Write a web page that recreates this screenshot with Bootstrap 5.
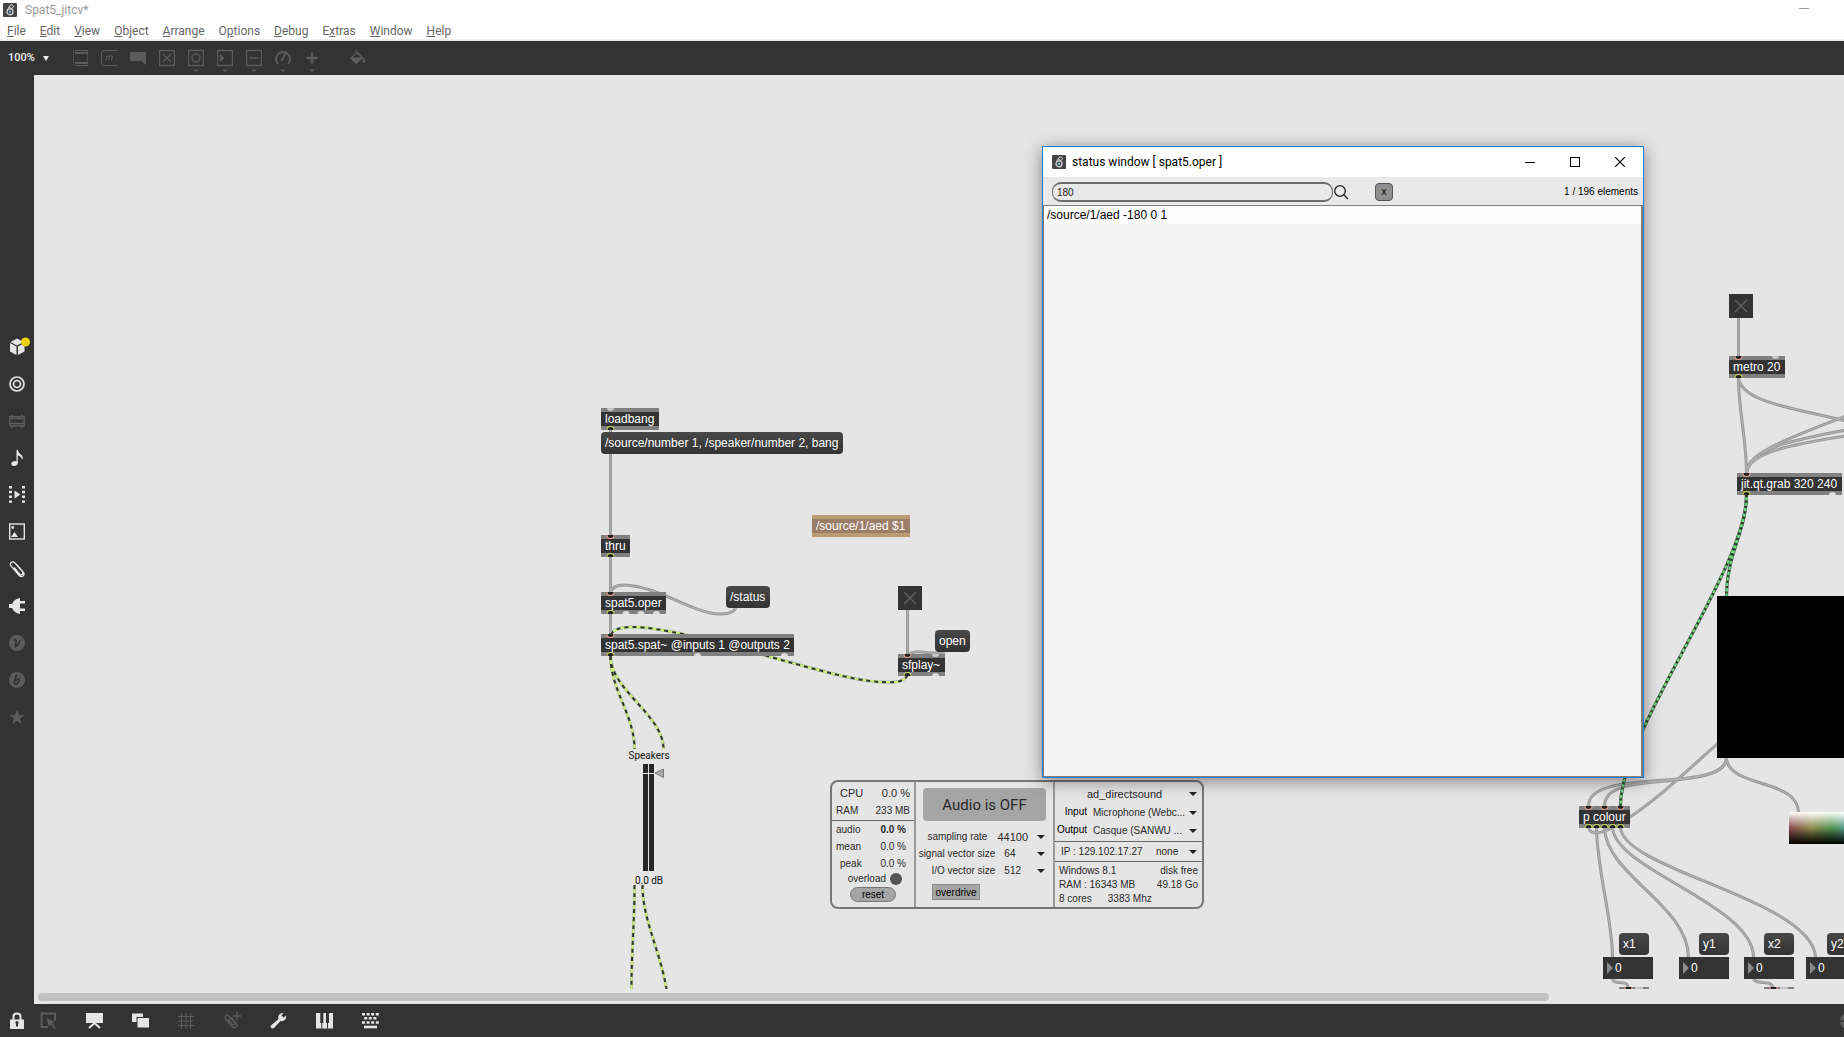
<!DOCTYPE html>
<html lang="en">
<head>
<meta charset="utf-8">
<meta name="viewport" content="width=device-width, initial-scale=1">
<title>Spat5_jitcv*</title>
<link href="https://cdn.jsdelivr.net/npm/bootstrap@5.3.0/dist/css/bootstrap.min.css" rel="stylesheet">
<style>
:root{--ink:#333;--paper:#e5e5e5;--dim:#5b5b5b;--lit:#e5e5e5}
body{font-family:"Liberation Sans",Arial,sans-serif;font-size:12px;line-height:16px;background:var(--ink);color:#222}
button,input,select{font:inherit;color:inherit;border:0;padding:0;background:none}
svg{display:block}
.ui-font{font-family:Roboto,"Open Sans",sans-serif}
.titlebar{height:20px;padding-left:3px;color:#999;background:#fff}
.titlebar .min-btn{width:70px;height:16px}
.menubar{height:21px;gap:14px;padding:2px 7px 0;background:#fff;border-bottom:2px solid #f0f0f0;line-height:18px}
.menubar a{color:#666;text-decoration:none}
.toolbar{height:34px;background:var(--ink);color:var(--dim)}
.toolbar .zoom-btn{width:65px;padding-left:8px;color:#eee;font:500 11px/16px Roboto,sans-serif}
.tool{width:29px;height:34px;color:inherit;display:flex;align-items:center;justify-content:center}
.tool.paint{margin-left:17px}
.sidebar{width:34px;background:var(--ink);padding-bottom:16px;color:var(--lit)}
.sidebar button{height:37px;width:34px;display:flex;align-items:center;justify-content:center}
.off{color:var(--dim)!important}
.footbar{height:33px;background:var(--ink);color:var(--lit)}
.footbar button{width:46px;height:33px;display:flex;align-items:center;justify-content:center}
.footbar .narrow{width:34px}
.footbar .pick{width:29px;margin-right:8px}
.footbar .cut{width:30px;margin-right:-19px}
.patch{background:var(--paper)}
.patch .wires{position:absolute;left:0;top:0}
.scroller{position:absolute;left:4px;bottom:3px;width:83.5%;height:8px;border-radius:4px;background:#c1c1c1}
.obj,.msg,.num,.tog{position:absolute;height:22px;white-space:nowrap;color:#fff}
.obj{background:var(--ink);border:solid #808080;border-width:4px 0;padding-left:4px;line-height:14px}
.msg{background:linear-gradient(#484848,#333);border-radius:4px;padding-left:4px;text-align:left;line-height:20px}
.num{width:50px;background:var(--ink) url("data:image/svg+xml,%3Csvg xmlns='http://www.w3.org/2000/svg' width='6' height='12'%3E%3Cpath d='M0 0L6 6L0 12z' fill='%238a8a8a'/%3E%3C/svg%3E") no-repeat 4px 5px;padding-left:12px}
.tog{width:24px;height:24px;appearance:none;background:var(--ink) url("data:image/svg+xml,%3Csvg xmlns='http://www.w3.org/2000/svg' width='24' height='24'%3E%3Cpath d='M6 6L18 18M18 6L6 18' stroke='%23636363' stroke-width='1.4'/%3E%3C/svg%3E")}
.obj.tan{background:#9c7d68;border-color:#bd9b72}
/* node places on the patch canvas */
#o-load{left:567px;top:333px;width:58px}
#m-init{left:567px;top:357px;width:242px}
#o-thru{left:567px;top:460px;width:29px}
#o-aed{left:778px;top:440px;width:98px}
#o-oper{left:567px;top:517px;width:65px}
#m-status{left:692px;top:511px;width:44px}
#o-spat{left:567px;top:559px;width:193px}
#t-play{left:864px;top:511px}
#m-open{left:901px;top:555px;width:35px}
#o-sf{left:864px;top:579px;width:47px}
#t-metro{left:1695px;top:219px}
#o-metro{left:1695px;top:281px;width:56px}
#o-grab{left:1703px;top:398px;width:105px}
#o-colour{left:1545px;top:731px;width:51px}
#m-x1{left:1585px;top:858px;width:30px}
#m-y1{left:1665px;top:858px;width:30px}
#m-x2{left:1730px;top:858px;width:30px}
#m-y2{left:1793px;top:858px;width:30px}
#n-x1{left:1569px;top:882px}
#n-y1{left:1645px;top:882px}
#n-x2{left:1710px;top:882px}
#n-y2{left:1772px;top:882px}
.screen{position:absolute;left:1683px;top:521px;width:320px;height:162px;background:#000}
.swatch{position:absolute;left:1755px;top:737px;width:128px;height:32px;background:linear-gradient(#fff,rgba(255,255,255,.4) 30%,rgba(255,255,255,0) 50%,rgba(0,0,0,.45) 70%,#000),linear-gradient(90deg,#8c4a50,#8e8a4c 22px,#4f9450 44px,#5a9c90 56px,#4a5a9a 90px,#8c4a70)}
.meter{position:absolute;left:585px;top:673px;width:60px;font:10px/16px Roboto,sans-serif;color:#111}
.meter .level{margin-top:2px}
/* audio driver panel */
.dsp{position:absolute;left:796px;top:705px;width:374px;height:129px;border:2px solid #777;border-radius:8px;font-size:10px;line-height:14px;color:#2a2a2a}
.dsp .cpu{width:82px}
.dsp .load{padding:4px 4px 2px}
.dsp .mid{width:141px;border:solid #999;border-width:0 2px}
.dsp .line{border-bottom:1px solid #666}
.dsp .r17{height:17px;padding:0 8px 0 4px}
.dsp .big{font-size:11px}
.dsp select{appearance:none;background:url("data:image/svg+xml,%3Csvg xmlns='http://www.w3.org/2000/svg' width='8' height='4'%3E%3Cpath d='M0 0H8L4 4z' fill='%23222'/%3E%3C/svg%3E") no-repeat right center;height:16px}
.dsp .audio-btn{height:33px;margin:6px 7px 7px;background:#a5a5a5;border-radius:4px;font:15px/20px Roboto,sans-serif}
.dsp .reset-btn{width:46px;height:15px;border:1px solid #777;border-radius:8px;background:#a5a5a5;line-height:12px;color:#000;margin-top:1px}
.dsp .od-btn{width:48px;height:16px;border:1px solid #8d8d8d;background:#a5a5a5;margin:5px 0 0 16px;line-height:13px;color:#000}
.dsp .opt label{width:80px;text-align:right;margin-right:9px}
.dsp .opt select{width:41px}
.dsp .opt.rate label{width:72px;margin-right:10px}
.dsp .opt.rate select{width:48px}
.dsp .led{width:12px;height:12px;border-radius:50%;background:#555}
.dsp .io{height:18px}
.dsp .io label{width:32px;text-align:right;margin-right:6px;color:#000}
.dsp .io select{width:104px}
.dsp .driver{display:block;width:110px;margin:4px 5px 3px 32px;font-size:11px;line-height:14px}
.dsp .ip{height:20px;padding:0 5px 0 6px}
.dsp .ip select{width:41px}
.dsp .sys{padding:2px 4px 0}
/* status window */
.statwin{position:absolute;left:1008px;top:71px;width:602px;height:632px;border:1px solid #1a7fd4;box-shadow:0 3px 16px rgba(0,0,0,.45)}
.statwin .cap{height:30px;background:#fff;color:#000;padding:0 1px 0 9px}
.statwin .cap-text{padding-left:6px}
.statwin .cap button{width:45px;height:30px;display:flex;align-items:center;justify-content:center}
.statwin .find{height:28px;background:#e9e9e9;padding:2px 5px 0 9px;font-size:10px}
.statwin .find input{width:281px;height:20px;border:2px solid #6b6b6b;border-left-width:1px;border-right-width:1px;border-radius:9px;padding:0 4px}
.statwin .clr{width:18px;height:18px;border:1px solid #555;border-radius:4px;background:#8f8f8f;margin-left:26px;line-height:12px;color:#000}
.statwin .list{border:1px solid #808080;border-right-width:2px;background:#f3f3f3}
.statwin .item{height:18px;background:#fcfcfc;padding-left:3px;font-size:12px;line-height:18px;color:#000}
</style>
<script src="https://cdn.jsdelivr.net/npm/bootstrap@5.3.0/dist/js/bootstrap.bundle.min.js"></script>
</head>
<body class="vh-100 d-flex flex-column overflow-hidden">
<svg width="0" height="0" class="position-absolute">
<defs>
<symbol id="logo" viewBox="0 0 14 14"><rect width="14" height="14" rx="1" fill="#444"/><circle cx="7" cy="8.800" r="3" fill="none" stroke="#d8d8d8" stroke-width="1.200"/><circle cx="8.400" cy="3.600" r="1.800" fill="none" stroke="#d8d8d8" stroke-width="1"/><path d="M6.400 3.200L4.600 6.600" stroke="#d8d8d8"/><circle cx="7" cy="8.800" r="1.100" fill="#7fd3e0"/></symbol>
<g id="inC"><path d="M-4 0A4 4 0 0 0 4 0z" fill="#f0a090"/><path d="M-3 0A3 3 0 0 0 3 0z" fill="#222"/></g>
<g id="outC"><path d="M-4 0A4 4 0 0 1 4 0z" fill="#c8d850"/><path d="M-3 0A3 3 0 0 1 3 0z" fill="#222"/></g>
<path id="inU" d="M-3.500 0A3.500 3 0 0 0 3.500 0z" fill="#c8c8c8"/>
<path id="outU" d="M-3.500 0A3.500 3 0 0 1 3.500 0z" fill="#dcdcdc"/>
</defs>
</svg>

<header class="ui-font flex-shrink-0">
  <div class="titlebar d-flex align-items-center gap-1">
    <svg width="14" height="14"><use href="#logo"/></svg><span class="ps-1 ms-n1 flex-grow-1">Spat5_jitcv*</span>
    <button class="min-btn" aria-label="Minimise"><svg width="70" height="16"><path d="M25 6.500H35" stroke="#999"/></svg></button>
  </div>
  <nav class="menubar d-flex">
    <a href="#"><u>F</u>ile</a><a href="#"><u>E</u>dit</a><a href="#"><u>V</u>iew</a><a href="#"><u>O</u>bject</a><a href="#"><u>A</u>rrange</a><a href="#">O<u>p</u>tions</a><a href="#"><u>D</u>ebug</a><a href="#">E<u>x</u>tras</a><a href="#"><u>W</u>indow</a><a href="#"><u>H</u>elp</a>
  </nav>
</header>

<div class="toolbar d-flex flex-shrink-0 align-items-center">
  <button class="zoom-btn d-flex align-items-center gap-2">100%<svg width="6" height="5"><path d="M0 0H6L3 5z" fill="#eee"/></svg></button>
  <button class="tool" aria-label="Object"><svg width="16" height="24" fill="none" stroke="currentColor"><path d="M3 4.500H16M3 19.500H16" /><path d="M3 7H16M3 17H16" stroke-width="2"/><path d="M1.500 4V20M15.500 4V20" opacity=".6"/></svg></button>
  <button class="tool" aria-label="Message"><svg width="16" height="24" fill="none" stroke="currentColor"><path d="M16 4.500H3Q.5 4.500.5 7V17Q.5 19.500 3 19.500H16M6 10L5 14.500M6 10H8.500L7.500 14.500M8.500 10H11.500L10.500 14.500"/></svg></button>
  <button class="tool" aria-label="Comment"><svg width="16" height="24"><path d="M0 6H16V19L11 15H0z" fill="currentColor"/></svg></button>
  <button class="tool" aria-label="Toggle"><svg width="16" height="24" fill="none" stroke="currentColor"><rect x=".5" y="4.500" width="15" height="15" stroke-width="1.400"/><path d="M4 8L12 16M12 8L4 16" stroke-width="1.300"/></svg></button>
  <button class="tool" aria-label="Button"><svg width="16" height="28" fill="none" stroke="currentColor"><rect x=".5" y="6.500" width="15" height="15" stroke-width="1.400"/><circle cx="8" cy="14" r="4" stroke-width="1.400"/><path d="M5 25.500H11L8 28z" fill="currentColor" stroke="none"/></svg></button>
  <button class="tool" aria-label="Number"><svg width="16" height="28" fill="none" stroke="currentColor"><rect x=".5" y="6.500" width="15" height="15" stroke-width="1.400"/><path d="M3 10L7.500 14L3 18z" fill="currentColor" stroke="none"/><path d="M5 25.500H11L8 28z" fill="currentColor" stroke="none"/></svg></button>
  <button class="tool" aria-label="Slider"><svg width="16" height="28" fill="none" stroke="currentColor"><rect x=".5" y="6.500" width="15" height="15" stroke-width="1.400"/><path d="M3 14H13" stroke-width="1.400"/><path d="M5 25.500H11L8 28z" fill="currentColor" stroke="none"/></svg></button>
  <button class="tool" aria-label="Dial"><svg width="18" height="28" fill="none" stroke="currentColor"><path d="M4 20A7 7 0 1 1 14 20" stroke-width="2"/><path d="M7.500 17L11.500 9.500" stroke-width="1.800"/><path d="M6 25.500H12L9 28z" fill="currentColor" stroke="none"/></svg></button>
  <button class="tool" aria-label="Add"><svg width="16" height="28" fill="none" stroke="currentColor"><path d="M8 8.500V19.500M2.500 14H13.500" stroke-width="2.400"/><path d="M5 25.500H11L8 28z" fill="currentColor" stroke="none"/></svg></button>
  <button class="tool paint" aria-label="Format"><svg width="17" height="18" fill="currentColor"><path d="M1 9L8 3L14 9L7 15.500z"/><path d="M6.500 1.500L14 9.500" stroke="currentColor" stroke-width="1.300"/><path d="M3.500 8.500L8 4.500L12 8.500z" fill="#333"/><path d="M14.500 8Q17 12 15.800 13.500Q14.500 14.500 13.500 13z"/></svg></button>
</div>

<main class="d-flex flex-grow-1 overflow-hidden">
  <aside class="sidebar d-flex flex-column justify-content-center flex-shrink-0">
    <button aria-label="Packages"><svg width="22" height="20" class="ms-1" fill="currentColor"><path d="M2 6L8.500 9.500V18L2 14.500zM10 9.500L16.500 6V14.500L10 18zM2.500 5L9 1.500L15.500 5L9 8.500z"/><circle cx="17.500" cy="5" r="4.500" fill="#f0d010"/></svg></button>
    <button aria-label="Target"><svg width="16" height="16" fill="none" stroke="currentColor" stroke-width="1.700"><circle cx="8" cy="8" r="7"/><circle cx="8" cy="8" r="3.500"/></svg></button>
    <button class="off" aria-label="Devices"><svg width="16" height="16" fill="none" stroke="currentColor" stroke-width="1.500"><rect x=".8" y="3.800" width="14.400" height="9"/><path d="M1 10.500H15M2 5.500H14M3 2V4M13 2V4M3 13V15M13 13V15"/></svg></button>
    <button aria-label="Audio"><svg width="16" height="18" fill="currentColor"><ellipse cx="5.500" cy="14.500" rx="3.200" ry="2.400" transform="rotate(-18 5.500 14.500)"/><path d="M7.500 1H8.800Q9.500 4 12 5.500Q15 8 13 11Q12.500 7 8.800 6.500V14.500H7.500z"/></svg></button>
    <button aria-label="Video"><svg width="16" height="17" fill="currentColor"><path d="M5.500 4.500L11.500 8.500L5.500 12.500z"/><path d="M1.500 0V17M14.500 0V17" stroke="currentColor" stroke-width="3" stroke-dasharray="2.400 2.400"/></svg></button>
    <button aria-label="Images"><svg width="16" height="17"><rect x=".7" y="1" width="14.600" height="15" fill="none" stroke="currentColor" stroke-width="1.400"/><circle cx="3.800" cy="4.500" r="1.400" fill="currentColor"/><path d="M2 14L5.500 9L9 14z" fill="currentColor"/></svg></button>
    <button aria-label="Clippings"><svg width="16" height="18" fill="none" stroke="currentColor" stroke-width="1.300"><path d="M5 7.500L10.500 14Q12 15.500 13.200 14.200Q14.500 13 13.200 11.300L6 3Q4 1 2.300 2.500Q.5 4 2.200 6.200L10 15.300Q12 17.500 14 16Q16 14 14.300 12.200L7.500 4.500"/></svg></button>
    <button aria-label="Plug-ins"><svg width="16" height="16" fill="currentColor"><path d="M0 6H3Q5 1 11 0V3H16V5.500H11V10.500H16V13H11V16Q5 15 3 10H0z"/></svg></button>
    <button class="off" aria-label="Vizzie"><svg width="16" height="16"><circle cx="8" cy="8" r="8" fill="currentColor"/><path d="M5 5.500Q7 3.500 7 6L6.800 11.500Q11 9 10.800 5" fill="none" stroke="#333" stroke-width="1.700"/></svg></button>
    <button class="off" aria-label="Beap"><svg width="16" height="16"><circle cx="8" cy="8" r="8" fill="currentColor"/><path d="M7.500 2.500L5.300 10.500Q5.500 13 8 11.500Q11 9 10 7Q8.500 6 6.500 9" fill="none" stroke="#333" stroke-width="1.700"/></svg></button>
    <button class="off" aria-label="Favourites"><svg width="16" height="16" fill="currentColor"><path d="M8 .5L10 6H15.500L11 9.500L12.700 15L8 11.700L3.300 15L5 9.500L.5 6H6z"/></svg></button>
  </aside>

  <section class="patch position-relative flex-grow-1 overflow-hidden">
    <svg class="wires" width="1810" height="914" viewBox="34 75 1810 914" fill="none">
      <defs>
        <g id="cords">
          <path d="M610.500 430V537M610.500 556V594M610.500 613V636M907.500 610V655M1738.500 318V357"/>
          <path d="M736 608C732 614 726 614 718 614C690 612 658 586 624 585C616 585 611 588 610.500 594"/>
          <path d="M945 652C930 656 915 647 907.500 656"/>
          <path d="M1738.500 378C1738.500 410 1746.500 440 1746.500 473"/>
          <path d="M1738.500 378C1742 402 1792 408 1846 421"/>
          <path d="M1746.500 473C1748 452 1790 438 1846 416"/>
          <path d="M1746.500 473C1748 448 1795 440 1846 430"/>
          <path d="M1746.500 473C1748 452 1795 444 1846 436"/>
          <path d="M1588.500 828C1592 838 1608 832 1630 817C1660 797 1690 768 1725 737"/>
          <path d="M1726.500 758C1726 775 1695 778 1665 780C1630 783 1588.500 784 1588.500 806"/>
          <path d="M1726.500 758C1726 775 1695 778 1665 781C1640 784 1604.500 784 1604.500 806"/>
          <path d="M1726.500 758C1728 788 1797 778 1798.500 812"/>
          <path d="M1596.500 828C1597 870 1612.500 920 1612.500 957"/>
          <path d="M1604.500 828C1606 875 1688 905 1688.500 957"/>
          <path d="M1612.500 828C1616 870 1753 905 1753.500 957"/>
          <path d="M1620.500 828C1624 870 1812 900 1815.500 957"/>
          <path d="M1612.500 979C1614 986 1628 978 1628.500 989M1753.500 979C1757 986 1771 978 1773.500 989"/>
        </g>
        <g id="signals">
          <path d="M907.500 675C904 684 890 682 880 682C830 680 690 627 632 627C618 627 611 631 610.500 636"/>
          <path d="M610.500 656C610.500 690 634.500 715 634.500 749"/>
          <path d="M610.500 656C610.500 690 663.500 715 663.500 749"/>
          <path d="M634.500 885C634.500 925 631.500 950 631.500 989"/>
          <path d="M642.500 885C642.500 920 660 950 666.500 989"/>
        </g>
        <g id="matrices">
          <path d="M1746.500 495C1746.500 530 1726.500 555 1726.500 596"/>
          <path d="M1746.500 495C1746.500 570 1620.500 730 1620.500 806"/>
        </g>
      </defs>
      <use href="#cords" stroke="#979797" stroke-width="3"/><use href="#cords" stroke="#b0b0b0" stroke-width="1.200"/>
      <use href="#signals" stroke="#b4b8a4" stroke-width="3"/><use href="#signals" stroke="#cdf573" stroke-width="1.800"/><use href="#signals" stroke="#333" stroke-width="2" stroke-dasharray="4 4"/>
      <use href="#matrices" stroke="#56645a" stroke-width="3.200"/><use href="#matrices" stroke="#6edc78" stroke-width="2"/><use href="#matrices" stroke="#2c3a2c" stroke-width="2.200" stroke-dasharray="2.200 3.300"/>
    </svg>

    <div class="obj" id="o-load">loadbang</div>
    <button class="msg" id="m-init">/source/number 1, /speaker/number 2, bang</button>
    <div class="obj" id="o-thru">thru</div>
    <div class="obj tan" id="o-aed">/source/1/aed $1</div>
    <div class="obj" id="o-oper">spat5.oper</div>
    <button class="msg" id="m-status">/status</button>
    <div class="obj" id="o-spat">spat5.spat~ @inputs 1 @outputs 2</div>
    <input type="checkbox" class="tog" id="t-play" aria-label="Play">
    <button class="msg" id="m-open">open</button>
    <div class="obj" id="o-sf">sfplay~</div>
    <input type="checkbox" class="tog" id="t-metro" aria-label="Metro on">
    <div class="obj" id="o-metro">metro 20</div>
    <div class="obj" id="o-grab">jit.qt.grab 320 240</div>
    <div class="screen"></div>
    <div class="swatch"></div>
    <div class="obj" id="o-colour">p colour</div>
    <button class="msg" id="m-x1">x1</button><button class="msg" id="m-y1">y1</button><button class="msg" id="m-x2">x2</button><button class="msg" id="m-y2">y2</button>
    <input class="num" id="n-x1" value="0" aria-label="x1"><input class="num" id="n-y1" value="0" aria-label="y1"><input class="num" id="n-x2" value="0" aria-label="x2"><input class="num" id="n-y2" value="0" aria-label="y2">

    <svg class="wires pe-none" width="1810" height="914" viewBox="34 75 1810 914">
      <use href="#inU" x="610.500" y="408"/><use href="#outC" x="610.500" y="430"/>
      <use href="#inC" x="610.500" y="535"/><use href="#outC" x="610.500" y="557"/>
      <use href="#inC" x="610.500" y="592"/><use href="#outC" x="610.500" y="614"/><use href="#outU" x="626" y="614"/><use href="#outU" x="641" y="614"/><use href="#outU" x="656.500" y="614"/>
      <use href="#inC" x="610.500" y="634"/><use href="#outC" x="610.500" y="656"/><use href="#outU" x="697.500" y="656"/><use href="#outU" x="784.500" y="656"/>
      <use href="#inC" x="907.500" y="654"/><use href="#inU" x="935.500" y="654"/><use href="#outC" x="907.500" y="676"/><use href="#outU" x="935.500" y="676"/>
      <use href="#inC" x="1738.500" y="356"/><use href="#inU" x="1775.500" y="356"/><use href="#outC" x="1738.500" y="378"/>
      <use href="#inC" x="1746.500" y="473"/><use href="#outC" x="1746.500" y="495"/><use href="#outU" x="1832.500" y="495"/>
      <use href="#inC" x="1588.500" y="806"/><use href="#inC" x="1604.500" y="806"/><use href="#inC" x="1620.500" y="806"/>
      <use href="#outC" x="1588.500" y="828"/><use href="#outC" x="1596.500" y="828"/><use href="#outC" x="1604.500" y="828"/><use href="#outC" x="1612.500" y="828"/><use href="#outC" x="1620.500" y="828"/>
      <path d="M1619 988H1649M1764 988H1794" stroke="#808080" stroke-width="2"/><path d="M1635 988H1643M1780 988H1788" stroke="#c4c4c4" stroke-width="2"/>
      <use href="#inC" x="1628.500" y="987"/><use href="#inC" x="1773.500" y="987"/>
    </svg>

    <div class="meter d-flex flex-column align-items-center">
      <span>Speakers</span>
      <svg width="34" height="107"><path d="M11 0H16V107H11zM17 0H22V107H17z" fill="#282828"/><path d="M11 9.500H22" stroke="#eee"/><path d="M23 9L31.500 5V13.500z" fill="#aaa" stroke="#777"/></svg>
      <span class="level">0.0 dB</span>
    </div>

    <div class="dsp d-flex">
      <div class="cpu">
        <div class="line load">
          <div class="d-flex justify-content-between big pb-1"><span class="ps-1">CPU</span><span>0.0 %</span></div>
          <div class="d-flex justify-content-between"><span>RAM</span><span>233 MB</span></div>
        </div>
        <div class="r17 d-flex justify-content-between align-items-center"><span>audio</span><b>0.0 %</b></div>
        <div class="r17 d-flex justify-content-between align-items-center"><span>mean</span><span>0.0 %</span></div>
        <div class="r17 d-flex justify-content-between align-items-center"><span class="ps-1">peak</span><span>0.0 %</span></div>
        <div class="d-flex justify-content-end align-items-center gap-1 pe-2 me-1"><span>overload</span><span class="led"></span></div>
        <div class="d-flex justify-content-center"><button class="reset-btn">reset</button></div>
      </div>
      <div class="mid d-flex flex-column">
        <button class="audio-btn">Audio is OFF</button>
        <div class="opt rate r17 ps-0 d-flex align-items-center"><label for="sr">sampling rate</label><select id="sr" class="big"><option>44100</option></select></div>
        <div class="opt r17 ps-0 d-flex align-items-center"><label for="sv">signal vector size</label><select id="sv"><option>64</option></select></div>
        <div class="opt r17 ps-0 d-flex align-items-center"><label for="iv">I/O vector size</label><select id="iv"><option>512</option></select></div>
        <button class="od-btn">overdrive</button>
      </div>
      <div class="flex-grow-1">
        <div class="line">
          <select class="driver" aria-label="Driver"><option>ad_directsound</option></select>
          <div class="io d-flex"><label for="inp">Input</label><select id="inp"><option>Microphone (Webc...</option></select></div>
          <div class="io d-flex"><label for="outp">Output</label><select id="outp"><option>Casque (SANWU ...</option></select></div>
        </div>
        <div class="ip line d-flex justify-content-between align-items-center"><span>IP : 129.102.17.27</span><select aria-label="Network"><option>none</option></select></div>
        <div class="sys">
          <div class="d-flex justify-content-between"><span>Windows 8.1</span><span>disk free</span></div>
          <div class="d-flex justify-content-between"><span>RAM : 16343 MB</span><span>49.18 Go</span></div>
          <div class="d-flex gap-3"><span>8 cores</span><span>3383 Mhz</span></div>
        </div>
      </div>
    </div>

    <div class="statwin d-flex flex-column">
      <div class="cap ui-font d-flex align-items-center">
        <svg width="14" height="14"><use href="#logo"/></svg><span class="cap-text flex-grow-1">status window [ spat5.oper ]</span>
        <button aria-label="Minimise"><svg width="10" height="10"><path d="M0 5.500H10" stroke="#000"/></svg></button>
        <button aria-label="Maximise"><svg width="10" height="10"><rect x=".5" y=".5" width="9" height="9" fill="none" stroke="#000"/></svg></button>
        <button aria-label="Close"><svg width="10" height="10"><path d="M0 0L10 10M10 0L0 10" stroke="#000" stroke-width="1.200"/></svg></button>
      </div>
      <div class="find d-flex align-items-center">
        <input value="180" aria-label="Search"><svg width="16" height="16" class="ms-0" fill="none" stroke="#222" stroke-width="1.300"><circle cx="7" cy="7" r="5.300"/><path d="M10.800 10.800L15 15"/></svg>
        <button class="clr">x</button>
        <span class="ms-auto text-black">1 / 196 elements</span>
      </div>
      <div class="list flex-grow-1"><div class="item">/source/1/aed -180 0 1</div></div>
    </div>

    <div class="scroller"></div>
  </section>
</main>

<footer class="footbar d-flex flex-shrink-0 overflow-hidden">
  <button class="narrow" aria-label="Lock"><svg width="14" height="17"><path d="M3.500 8V4.500Q3.500 1.500 7 1.500T10.500 4.500V8" fill="none" stroke="currentColor" stroke-width="2"/><path d="M0 7.500H14V17H0z" fill="currentColor"/><path d="M7 10V14.500" stroke="#333" stroke-width="2"/><circle cx="7" cy="10.500" r="1.600" fill="#333"/></svg></button>
  <button class="pick off" aria-label="Select"><svg width="17" height="17"><path d="M8 15H1.500V1.500H15V9" fill="none" stroke="currentColor" stroke-width="2"/><path d="M6.500 6L15 10L12 11L16 16L14.500 17L11 12.500L9 15z" fill="currentColor"/></svg></button>
  <button aria-label="Presentation"><svg width="17" height="17"><path d="M0 1H17V11H0z" fill="currentColor"/><path d="M3 16L8.500 11L14 16" fill="none" stroke="currentColor" stroke-width="2"/></svg></button>
  <button aria-label="Windows"><svg width="17" height="17" fill="currentColor"><path d="M0 1.500H11V5H4.500V10H0z"/><path d="M5.500 6H17V15.500H5.500z"/></svg></button>
  <button class="off" aria-label="Grid"><svg width="16" height="16" stroke="currentColor"><path d="M3.500 0V16M8 0V16M12.500 0V16M0 3.500H16M0 8H16M0 12.500H16"/></svg></button>
  <button class="off" aria-label="Add clipping"><svg width="17" height="17" fill="none" stroke="currentColor" stroke-width="1.300"><path d="M4 7L8.500 12.500Q9.500 13.500 10.500 12.500T10.500 10.500L5 4Q3.500 2.500 2 4T1.500 7L8.500 15Q10 16.500 12 15T12.500 11.500L7.500 5.500M13 0V8M9 4H17"/></svg></button>
  <button aria-label="Inspector"><svg width="17" height="17" fill="currentColor"><path d="M1 13.500L8.500 7Q7.500 3 10.500 1.500Q12 .8 13.500 1L11.500 3.500L13.500 5.500L16.300 3.500Q16.500 7 14 8.500Q12 9.500 10.500 9L4 16Q2.500 17 1 15.800Q0 14.500 1 13.500z"/></svg></button>
  <button aria-label="Keyboard"><svg width="17" height="17"><path d="M0 1H17V16.500H0z" fill="currentColor"/><path d="M5.800 1V16.500M11.500 1V16.500" stroke="#333"/><path d="M5.800 1V11M11.500 1V11" stroke="#333" stroke-width="3"/></svg></button>
  <button aria-label="Key map"><svg width="17" height="17" stroke="currentColor" stroke-width="2.600"><path d="M0 2.300H17" stroke-dasharray="3 1.600"/><path d="M2.200 6.300H15" stroke-dasharray="3 1.600"/><path d="M0 10.500H17" stroke-dasharray="3 1.600"/><path d="M2 15H15"/></svg></button>
  <button class="cut off ms-auto flex-shrink-0" aria-label="Power"><svg width="16" height="16"><circle cx="8" cy="8" r="8" fill="currentColor"/><path d="M0 8H16" stroke="#333" stroke-width="1.500"/></svg></button>
</footer>
</body>
</html>
